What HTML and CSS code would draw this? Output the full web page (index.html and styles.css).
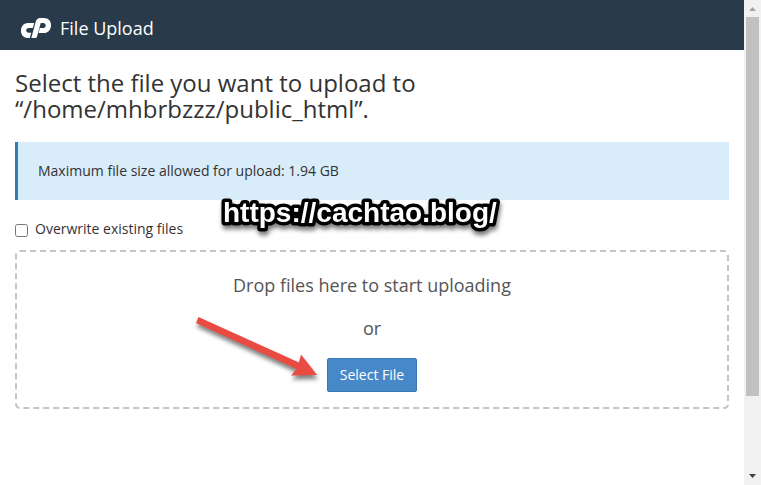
FILE: index.html
```html
<!DOCTYPE html>
<html lang="en">
<head>
<meta charset="utf-8">
<meta name="viewport" content="width=device-width, initial-scale=1">
<title>File Upload</title>
<link rel="stylesheet" href="styles.css">
</head>
<body>
<div class="window">
  <div class="page">
    <header class="navbar">
      <svg class="logo" viewBox="0 0 30 20" role="img" aria-label="cPanel">
        <path d="M7 5H13.300L11.800 10H7.800C6.200 10 5.200 11 5.200 12.300C5.200 13.800 6.200 14.700 7.800 14.700H10.300L8.700 20H7C2.500 20 0 17 0 12.800C0 8 3 5 7 5Z"/>
        <path d="M10.300 20L14.800 3.500C15.500 1.200 17 0 19 0H23C27.500 0 30 3 30 6.900C30 11.800 27 15 22.800 15H17.500L18.900 10H22C23.800 10 24.700 8.900 24.700 7.400C24.700 6 23.800 5 22 5H19.700L15.900 19C15.700 19.700 15.200 20 14.500 20Z"/>
      </svg>
      <span class="title">File Upload</span>
    </header>
    <main class="content">
      <h1 class="heading">Select the file you want to upload to <br>“/home/mhbrbzzz/public_html”.</h1>
      <div class="notice">
        Maximum file size allowed for upload: 1.94 GB
        <svg class="watermark" viewBox="0 0 300 50" aria-hidden="true">
          <text x="12" y="32">https://cachtao.blog/</text>
        </svg>
      </div>
      <div class="option">
        <input type="checkbox" id="overwrite">
        <label for="overwrite">Overwrite existing files</label>
      </div>
      <section class="dropzone">
        <svg class="outline" aria-hidden="true"><rect x="1" y="1" width="100%" height="100%" rx="4"/></svg>
        <p>Drop files here to start uploading</p>
        <p>or</p>
        <div class="action">
          <button class="select" type="button">Select File</button>
          <svg class="arrow" viewBox="0 0 140 80" aria-hidden="true">
            <path d="M11.500 9L112 54.500L114 46.500L130 67L104 67.500L109.500 61L9 15Z"/>
          </svg>
        </div>
      </section>
    </main>
  </div>
  <div class="scrollbar" aria-hidden="true">
    <svg class="up" viewBox="0 0 17 17"><path d="M5 11L8.500 7L12 11Z"/></svg>
    <div class="track"><div class="thumb"></div></div>
    <svg class="down" viewBox="0 0 17 17"><path d="M5 6L8.500 10L12 6Z"/></svg>
  </div>
</div>
</body>
</html>
```
FILE: styles.css
```css
* { box-sizing: border-box; }

body {
  margin: 0;
  background: #fff;
  color: #333;
  font: 14px/20px "Open Sans", "Noto Sans", sans-serif;
}

.window {
  display: flex;
  min-height: 100vh;
}

.page {
  flex: 1;
  min-width: 0;
}

.navbar {
  display: flex;
  align-items: center;
  gap: 9px;
  padding: 15px 21px 9px;
  background: #293a4a;
  color: #fff;
  font-size: 18px;
  line-height: 26px;
}

.logo {
  width: 30px;
  height: 20px;
  fill: #fff;
}

.content { padding: 20px 15px; }

.heading {
  margin: 0 0 20px;
  font-size: 24px;
  font-weight: 400;
  line-height: 26px;
}

.notice {
  position: relative;
  padding: 19px 20px;
  border-left: 3px solid #2f7fb5;
  background: #d9ecf9;
}

.watermark {
  position: absolute;
  left: 193px;
  top: 48px;
  width: 300px;
  height: 50px;
  filter: drop-shadow(1px 4px 2px rgba(0, 0, 0, 0.5));
}

.watermark text {
  font: bold 28px "Liberation Sans", Arial, sans-serif;
  fill: #fff;
  stroke: #000;
  stroke-width: 7px;
  stroke-linejoin: round;
  paint-order: stroke;
}

.option {
  display: flex;
  align-items: center;
  gap: 7px;
  padding: 19px 0 11px;
}

.option input {
  width: 13px;
  height: 13px;
  margin: 3px 0 0;
}

.dropzone {
  position: relative;
  padding: 22px 16px 17px;
  color: #555;
  font-size: 18px;
  line-height: 27px;
  text-align: center;
}

.dropzone p { margin: 0 0 16px; }

.outline {
  position: absolute;
  inset: 0 2px 2px 0;
  width: calc(100% - 2px);
  height: calc(100% - 2px);
  overflow: visible;
  fill: none;
  stroke: #c4c4c4;
  stroke-width: 2px;
  stroke-dasharray: 6 4;
}

.action {
  position: relative;
  width: fit-content;
  margin: 0 auto;
}

.select {
  display: block;
  padding: 6px 12px;
  border: 1px solid #3a78b5;
  border-radius: 2px;
  background: #4788c9;
  color: #fff;
  font: inherit;
  font-size: 14px;
  line-height: 20px;
}

.arrow {
  position: absolute;
  right: 100%;
  top: -50px;
  width: 140px;
  height: 80px;
  fill: #e94b42;
  filter: drop-shadow(1px 4px 2px rgba(0, 0, 0, 0.5));
}

.scrollbar {
  display: flex;
  flex-direction: column;
  flex: 0 0 17px;
  background: #f1f1f1;
}

.scrollbar svg {
  width: 17px;
  height: 17px;
}

.up { fill: #a3a3a3; }
.down { fill: #404040; }

.track {
  flex: 1;
  padding: 0 2px;
}

.thumb {
  height: 84%;
  background: #c1c1c1;
}
```
